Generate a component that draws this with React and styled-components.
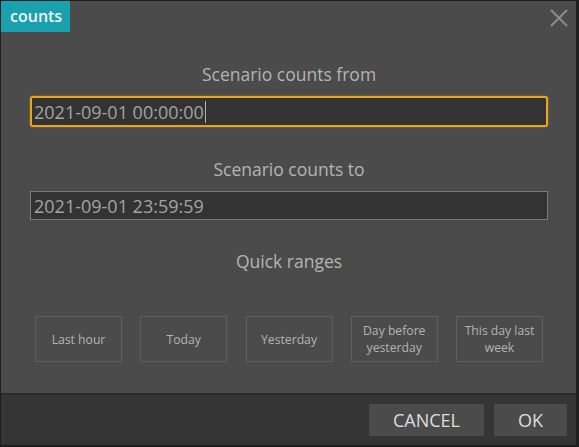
import React from 'react';
import styled, { createGlobalStyle } from 'styled-components';

const GlobalStyle = createGlobalStyle`
  html, body {
    margin: 0;
    padding: 0;
    background: #1c1c1c;
  }
  * {
    box-sizing: border-box;
  }
`;

const Dialog = styled.div`
  width: 579px;
  height: 447px;
  display: flex;
  flex-direction: column;
  background: #4b4b4b;
  border: 1px solid #1e1e1e;
  border-right-width: 3px;
  border-bottom-width: 2px;
  font-family: "Open Sans", "Noto Sans", sans-serif;
  position: relative;
`;

const Header = styled.div`
  display: flex;
  justify-content: space-between;
  align-items: flex-start;
  height: 32px;
`;

const Tab = styled.div`
  background: #1aa1b0;
  color: #f2f2f2;
  font-size: 16px;
  font-weight: 600;
  height: 31px;
  line-height: 31px;
  padding: 0 8px 0 9px;
`;

const Close = styled.button`
  background: none;
  border: none;
  padding: 0;
  margin: 7px 7px 0 0;
  width: 20px;
  height: 20px;
  cursor: pointer;
`;

const Body = styled.div`
  flex: 1;
  display: flex;
  flex-direction: column;
  padding: 0 28px 0 29px;
`;

const Label = styled.div`
  text-align: center;
  color: #b4b4b4;
  font-size: 17.5px;
  line-height: 22px;
  margin-top: ${({ $top }) => $top}px;
`;

const Field = styled.div`
  margin-top: ${({ $top }) => $top}px;
  height: ${({ $focused }) => ($focused ? 31 : 29)}px;
  background: #333333;
  border: ${({ $focused }) => ($focused ? '2px solid #eea418' : '1px solid #7a7a7a')};
  border-radius: ${({ $focused }) => ($focused ? 3 : 0)}px;
  box-shadow: ${({ $focused }) => ($focused ? '0 0 2px rgba(238,164,24,0.6)' : 'none')};
  color: #a3a3a3;
  font-size: 18px;
  display: flex;
  align-items: center;
  padding-left: ${({ $focused }) => ($focused ? 2 : 3)}px;
`;

const Caret = styled.span`
  display: inline-block;
  width: 1px;
  height: 22px;
  background: #b0b0b0;
  margin-left: 1px;
`;

const Ranges = styled.div`
  display: flex;
  justify-content: space-between;
  margin-top: 44px;
  padding: 0 5px 0 5px;
`;

const RangeButton = styled.button`
  width: 87px;
  height: 46px;
  background: transparent;
  border: 1px solid #5f5f5f;
  color: #b3b3b3;
  font-family: inherit;
  font-size: 12.2px;
  line-height: 17px;
  padding: 0 6px;
  cursor: pointer;
`;

const Footer = styled.div`
  height: 52px;
  background: #353535;
  border-top: 2px solid #2b2b2b;
  display: flex;
  justify-content: flex-end;
  align-items: center;
  gap: 10px;
  padding: 0 9px 0 0;
`;

const FooterButton = styled.button`
  width: ${({ $w }) => $w}px;
  height: 32px;
  background: #4b4b4b;
  border: none;
  color: #dedede;
  font-family: inherit;
  font-size: 18px;
  cursor: pointer;
`;

const ranges = ['Last hour', 'Today', 'Yesterday', 'Day before yesterday', 'This day last week'];

export default function App() {
  return (
    <>
      <GlobalStyle />
      <Dialog>
        <Header>
          <Tab>counts</Tab>
          <Close aria-label="close">
            <svg width="20" height="20" viewBox="0 0 20 20">
              <path d="M2 2 L18 18 M18 2 L2 18" stroke="#8a8a8a" strokeWidth="2.2" />
            </svg>
          </Close>
        </Header>
        <Body>
          <Label $top={30}>Scenario counts from</Label>
          <Field $top={11} $focused>
            2021-09-01 00:00:00<Caret />
          </Field>
          <Label $top={31}>Scenario counts to</Label>
          <Field $top={11}>2021-09-01 23:59:59</Field>
          <Label $top={30}>Quick ranges</Label>
          <Ranges>
            {ranges.map((r) => (
              <RangeButton key={r}>{r}</RangeButton>
            ))}
          </Ranges>
        </Body>
        <Footer>
          <FooterButton $w={115}>CANCEL</FooterButton>
          <FooterButton $w={73}>OK</FooterButton>
        </Footer>
      </Dialog>
    </>
  );
}
